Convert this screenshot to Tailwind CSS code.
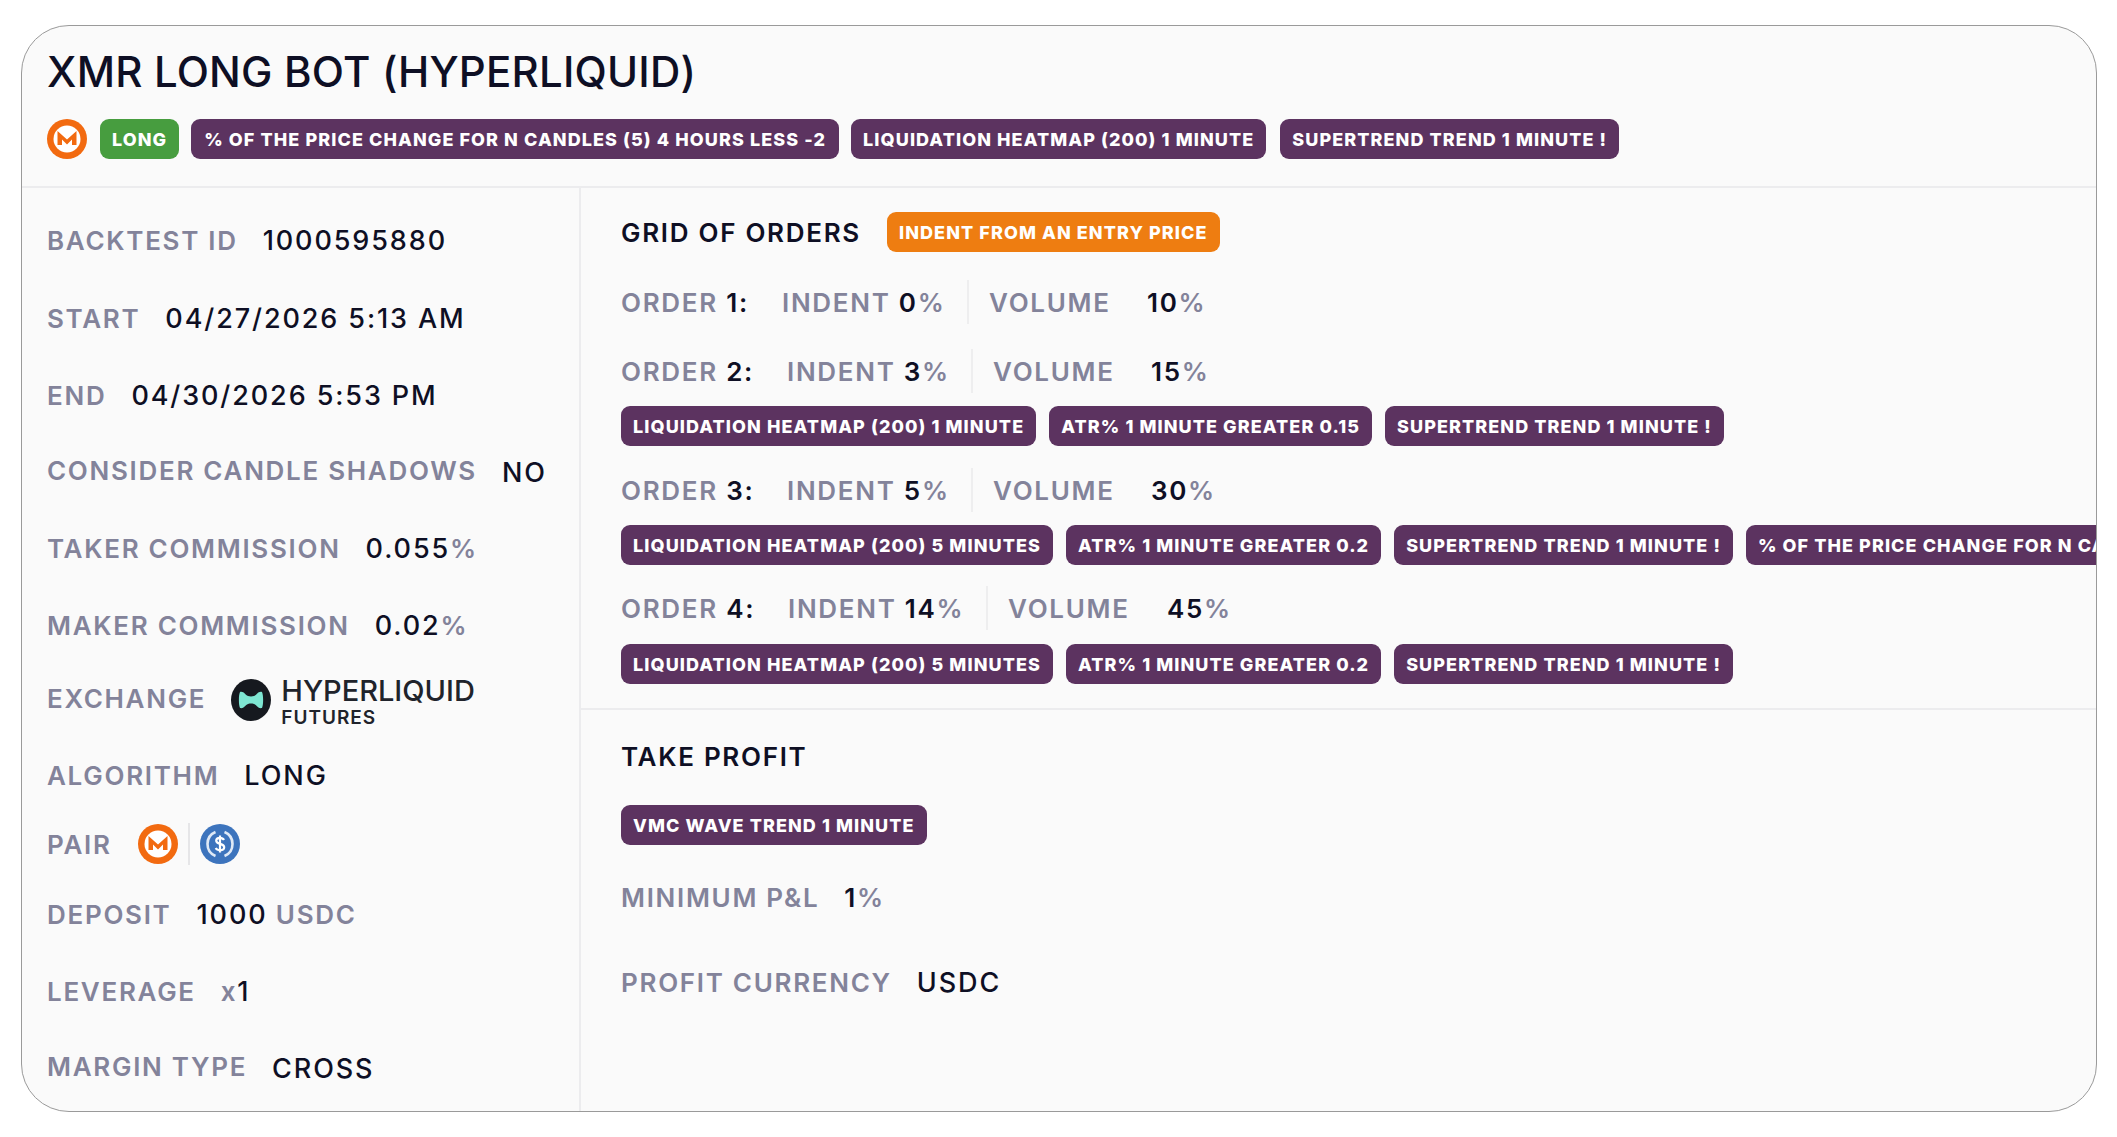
<!DOCTYPE html>
<html lang="en">
<head>
  <meta charset="UTF-8" />
  <title>XMR Long Bot</title>
  <script src="https://cdn.jsdelivr.net/npm/@tailwindcss/browser@4"></script>
</head>
<body class="bg-white font-['Inter',sans-serif]">
  <svg class="hidden">
    <symbol id="xmr" viewBox="0 0 40 40">
      <circle cx="20" cy="20" r="20" fill="#f26a10"/>
      <circle cx="20" cy="20" r="13.5" fill="#fff"/>
      <path d="M10.5 12 20 20.5 29.5 12V26h-4.500v-5.500L20 25.500l-5-5V26h-4.500z" fill="#f26a10"/>
    </symbol>
  </svg>

  <div class="w-full h-[1137px] pt-[25px] pl-[21px]">
    <div class="w-[2076px] h-[1087px] bg-[#fafafa] border border-[#9a9a9a] rounded-[48px] overflow-hidden flex flex-col">
      <!-- header -->
      <div class="h-[162px] shrink-0 border-b-2 border-[#ececee] pl-[25px] pt-[22px]">
        <h1 class="text-[42px] leading-[48px] font-medium text-[#0e0f24] tracking-[0.2px]">XMR LONG BOT (HYPERLIQUID)</h1>
        <div class="flex items-center mt-[23px] text-white text-[18px] font-extrabold tracking-[1.08px] whitespace-nowrap">
          <svg class="w-[40px] h-[40px] mr-[13px]"><use href="#xmr"/></svg>
          <span class="h-[40px] px-[12px] mr-[12px] flex items-center rounded-[9px] bg-[#479d3f]">LONG</span>
          <span class="h-[40px] px-[13px] mr-[12px] flex items-center rounded-[9px] bg-[#5c3360]">% OF THE PRICE CHANGE FOR N CANDLES (5) 4 HOURS LESS -2</span>
          <span class="h-[40px] px-[12px] mr-[14px] flex items-center rounded-[9px] bg-[#5c3360]">LIQUIDATION HEATMAP (200) 1 MINUTE</span>
          <span class="h-[40px] px-[12px] flex items-center rounded-[9px] bg-[#5c3360]">SUPERTREND TREND 1 MINUTE !</span>
        </div>
      </div>

      <div class="flex flex-1 min-h-0">
        <!-- left column -->
        <div class="w-[559px] shrink-0 border-r-2 border-[#ececee] pl-[25px] pt-[32px] flex flex-col text-[26px] tracking-[1.7px] text-[#83839a] font-semibold whitespace-nowrap">
          <div class="h-[40px] flex items-center gap-[25px]"><span>BACKTEST ID</span><span class="text-[27px] tracking-[1.9px] text-[#0e0f24] font-medium mt-[3px]">1000595880</span></div>
          <div class="h-[40px] mt-[38px] flex items-center gap-[25px]"><span>START</span><span class="text-[27px] tracking-[1.9px] text-[#0e0f24] font-medium mt-[3px]">04/27/2026 5:13 AM</span></div>
          <div class="h-[40px] mt-[37px] flex items-center gap-[25px]"><span>END</span><span class="text-[27px] tracking-[1.9px] text-[#0e0f24] font-medium mt-[3px]">04/30/2026 5:53 PM</span></div>
          <div class="h-[40px] mt-[35px] flex items-center gap-[25px]"><span>CONSIDER CANDLE SHADOWS</span><span class="text-[27px] tracking-[1.9px] text-[#0e0f24] font-medium mt-[6px]">NO</span></div>
          <div class="h-[40px] mt-[38px] flex items-center gap-[25px]"><span>TAKER COMMISSION</span><span class="mt-[3px]"><span class="text-[27px] tracking-[1.9px] text-[#0e0f24] font-medium">0.055</span>%</span></div>
          <div class="h-[40px] mt-[37px] flex items-center gap-[25px]"><span>MAKER COMMISSION</span><span class="mt-[3px]"><span class="text-[27px] tracking-[1.9px] text-[#0e0f24] font-medium">0.02</span>%</span></div>
          <div class="h-[40px] mt-[33px] flex items-center gap-[25px]">
            <span>EXCHANGE</span>
            <div class="flex items-center gap-[10px] tracking-normal mt-[4px]">
              <svg class="w-[40px] h-[46px]" viewBox="0 0 40 46"><ellipse cx="20" cy="23" rx="20" ry="21" fill="#16191f"/><path d="M9 15c4-1 5 3 8 4 2 .6 4 .6 6 0 3-1 4-5 8-4 1.500 3 1.500 13 0 16-4 1-5-3-8-4-2-.6-4-.6-6 0-3 1-4 5-8 4-1.500-3-1.500-13 0-16z" fill="#7ee6d2"/></svg>
              <div class="flex flex-col text-[#20232b] mt-[4px]">
                <span class="text-[29px] leading-[32px] font-medium">HYPERLIQUID</span>
                <span class="text-[19px] leading-[22px] font-semibold tracking-[1px]">FUTURES</span>
              </div>
            </div>
          </div>
          <div class="h-[40px] mt-[37px] flex items-center gap-[25px]"><span>ALGORITHM</span><span class="text-[27px] tracking-[1.9px] text-[#0e0f24] font-medium mt-[3px]">LONG</span></div>
          <div class="h-[40px] mt-[29px] flex items-center gap-[26px]">
            <span>PAIR</span>
            <div class="flex items-center gap-[10px]">
              <svg class="w-[40px] h-[40px]"><use href="#xmr"/></svg>
              <span class="w-[2px] h-[42px] bg-[#e6e6e8]"></span>
              <svg class="w-[40px] h-[40px]" viewBox="0 0 40 40">
                <circle cx="20" cy="20" r="20" fill="#3d74bd"/>
                <path d="M15.500 8a13 13 0 0 0 0 24M24.500 8a13 13 0 0 1 0 24" fill="none" stroke="#dfe9f6" stroke-width="2.600"/>
                <path d="M24 16c-.8-1.500-2.200-2.200-4-2.200-2.200 0-3.800 1.100-3.800 2.900 0 4 8 2.400 8 6.600 0 1.900-1.800 3-4.200 3-1.900 0-3.500-.7-4.300-2.200M20 11.500v17" fill="none" stroke="#fff" stroke-width="2.200"/>
              </svg>
            </div>
          </div>
          <div class="h-[40px] mt-[30px] flex items-center gap-[25px]"><span>DEPOSIT</span><span class="mt-[3px]"><span class="text-[27px] tracking-[1.9px] text-[#0e0f24] font-medium">1000</span> USDC</span></div>
          <div class="h-[40px] mt-[37px] flex items-center gap-[25px]"><span>LEVERAGE</span><span class="mt-[3px]">x<span class="text-[27px] text-[#0e0f24] font-medium">1</span></span></div>
          <div class="h-[40px] mt-[35px] flex items-center gap-[25px]"><span>MARGIN TYPE</span><span class="text-[27px] tracking-[1.9px] text-[#0e0f24] font-medium mt-[6px]">CROSS</span></div>
        </div>

        <!-- right column -->
        <div class="flex-1 min-w-0 flex flex-col text-[26px] tracking-[1.7px] text-[#83839a] font-semibold whitespace-nowrap">
          <div class="h-[522px] shrink-0 border-b-2 border-[#ececee] pl-[40px] pt-[24px]">
            <div class="flex items-center h-[40px] gap-[26px]">
              <span class="text-[#0e0f24]">GRID OF ORDERS</span>
              <span class="h-[40px] px-[12px] flex items-center rounded-[9px] bg-[#ee7d11] text-white text-[18px] font-extrabold tracking-[1.08px]">INDENT FROM AN ENTRY PRICE</span>
            </div>

            <div class="flex items-center h-[48px] mt-[26px]">
              <span class="w-[161px]">ORDER <span class="text-[#0e0f24]">1:</span></span>
              <span class="w-[185px]">INDENT <span class="text-[#0e0f24]">0</span>%</span>
              <span class="w-[2px] h-[44px] bg-[#eeeeef] mr-[20px]"></span>
              <span class="w-[158px]">VOLUME</span><span><span class="text-[#0e0f24]">10</span>%</span>
            </div>
            <div class="flex items-center h-[48px] mt-[21px]">
              <span class="w-[166px]">ORDER <span class="text-[#0e0f24]">2:</span></span>
              <span class="w-[184px]">INDENT <span class="text-[#0e0f24]">3</span>%</span>
              <span class="w-[2px] h-[44px] bg-[#eeeeef] mr-[20px]"></span>
              <span class="w-[158px]">VOLUME</span><span><span class="text-[#0e0f24]">15</span>%</span>
            </div>
            <div class="flex items-center mt-[11px] gap-[13px] text-white text-[18px] font-extrabold tracking-[1.08px]">
              <span class="h-[40px] px-[12px] flex items-center rounded-[9px] bg-[#5c3360]">LIQUIDATION HEATMAP (200) 1 MINUTE</span>
              <span class="h-[40px] px-[12px] flex items-center rounded-[9px] bg-[#5c3360]">ATR% 1 MINUTE GREATER 0.15</span>
              <span class="h-[40px] px-[12px] flex items-center rounded-[9px] bg-[#5c3360]">SUPERTREND TREND 1 MINUTE !</span>
            </div>

            <div class="flex items-center h-[48px] mt-[20px]">
              <span class="w-[166px]">ORDER <span class="text-[#0e0f24]">3:</span></span>
              <span class="w-[184px]">INDENT <span class="text-[#0e0f24]">5</span>%</span>
              <span class="w-[2px] h-[44px] bg-[#eeeeef] mr-[20px]"></span>
              <span class="w-[158px]">VOLUME</span><span><span class="text-[#0e0f24]">30</span>%</span>
            </div>
            <div class="flex items-center mt-[11px] gap-[13px] text-white text-[18px] font-extrabold tracking-[1.08px]">
              <span class="h-[40px] px-[12px] flex items-center rounded-[9px] bg-[#5c3360]">LIQUIDATION HEATMAP (200) 5 MINUTES</span>
              <span class="h-[40px] px-[12px] flex items-center rounded-[9px] bg-[#5c3360]">ATR% 1 MINUTE GREATER 0.2</span>
              <span class="h-[40px] px-[12px] flex items-center rounded-[9px] bg-[#5c3360]">SUPERTREND TREND 1 MINUTE !</span>
              <span class="h-[40px] px-[12px] flex items-center rounded-[9px] bg-[#5c3360]">% OF THE PRICE CHANGE FOR N CANDLES (5) 4 HOURS LESS -2</span>
            </div>

            <div class="flex items-center h-[48px] mt-[19px]">
              <span class="w-[167px]">ORDER <span class="text-[#0e0f24]">4:</span></span>
              <span class="w-[198px]">INDENT <span class="text-[#0e0f24]">14</span>%</span>
              <span class="w-[2px] h-[44px] bg-[#eeeeef] mr-[20px]"></span>
              <span class="w-[159px]">VOLUME</span><span><span class="text-[#0e0f24]">45</span>%</span>
            </div>
            <div class="flex items-center mt-[12px] gap-[13px] text-white text-[18px] font-extrabold tracking-[1.08px]">
              <span class="h-[40px] px-[12px] flex items-center rounded-[9px] bg-[#5c3360]">LIQUIDATION HEATMAP (200) 5 MINUTES</span>
              <span class="h-[40px] px-[12px] flex items-center rounded-[9px] bg-[#5c3360]">ATR% 1 MINUTE GREATER 0.2</span>
              <span class="h-[40px] px-[12px] flex items-center rounded-[9px] bg-[#5c3360]">SUPERTREND TREND 1 MINUTE !</span>
            </div>
          </div>

          <div class="pl-[40px] pt-[26px]">
            <div class="h-[40px] flex items-center text-[#0e0f24]">TAKE PROFIT</div>
            <div class="mt-[29px] flex text-white text-[18px] font-extrabold tracking-[1.08px]">
              <span class="h-[40px] px-[12px] flex items-center rounded-[9px] bg-[#5c3360]">VMC WAVE TREND 1 MINUTE</span>
            </div>
            <div class="h-[40px] mt-[32px] flex items-center gap-[25px]"><span>MINIMUM P&amp;L</span><span><span class="text-[#0e0f24]">1</span>%</span></div>
            <div class="h-[40px] mt-[45px] flex items-center gap-[25px]"><span>PROFIT CURRENCY</span><span class="text-[27px] tracking-[1.9px] text-[#0e0f24] font-medium mt-[2px]">USDC</span></div>
          </div>
        </div>
      </div>
    </div>
  </div>
</body>
</html>
